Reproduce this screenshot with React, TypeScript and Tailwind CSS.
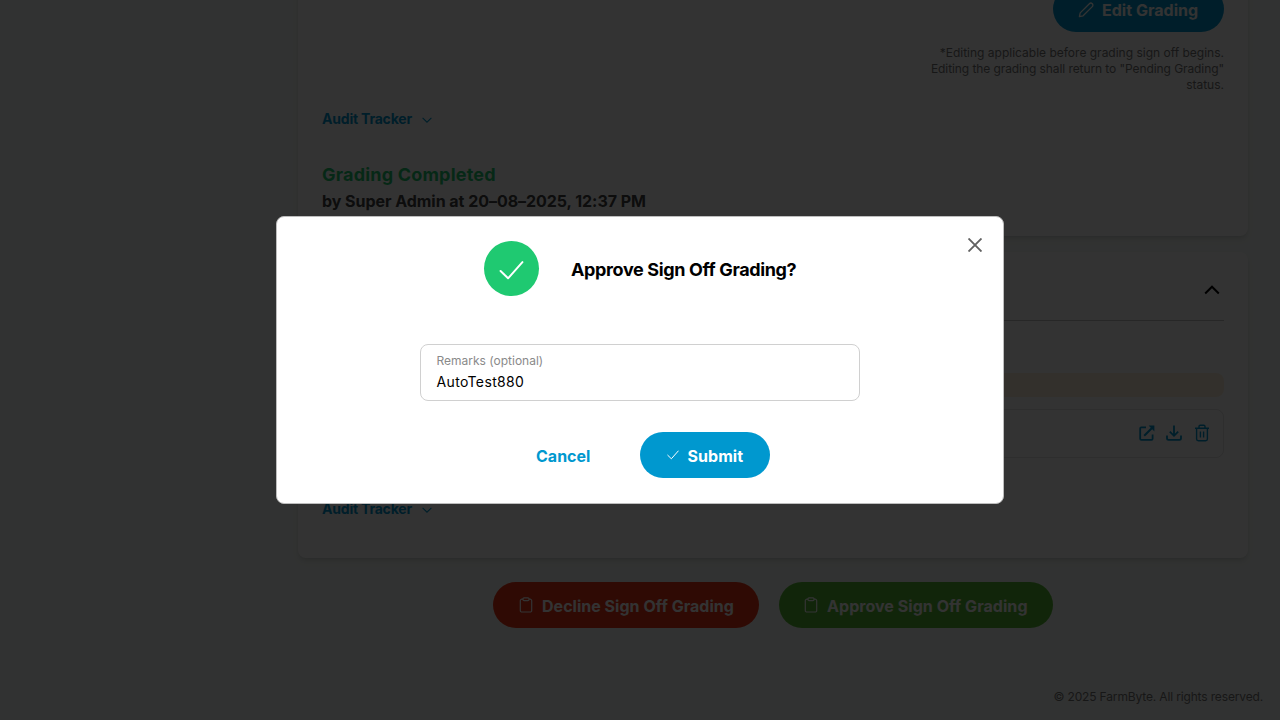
import React from "react";

type IconProps = { className?: string };

const Check = ({ className }: IconProps) => (
  <svg viewBox="0 0 24 24" className={className} fill="none" stroke="currentColor" strokeLinecap="round" strokeLinejoin="round">
    <path d="M1.5 12.5L8.7 19.5L22.5 4" />
  </svg>
);

const Clipboard = () => (
  <svg viewBox="0 0 14 16" className="h-4 w-3.5" fill="none" stroke="currentColor" strokeWidth="1.2">
    <path d="M4 2.2H3A1.6 1.6 0 0 0 1.3 3.8V13.4A1.6 1.6 0 0 0 3 15H11A1.6 1.6 0 0 0 12.7 13.4V3.8A1.6 1.6 0 0 0 11 2.2H10" />
    <rect x="4" y="0.8" width="6" height="2.8" rx="1" />
  </svg>
);

const Pencil = () => (
  <svg viewBox="0 0 16 16" className="size-4" fill="none" stroke="currentColor" strokeWidth="1.3" strokeLinejoin="round">
    <path d="M1.4 14.6L2.2 10.9L11.4 1.7A1.9 1.9 0 0 1 14.3 4.6L5.1 13.8Z" />
  </svg>
);

const OpenIcon = () => (
  <svg viewBox="0 0 16 16" className="size-4" fill="none" stroke="currentColor" strokeWidth="1.8">
    <path d="M7 2.4H2.2A1 1 0 0 0 1.2 3.4V13.8A1 1 0 0 0 2.2 14.8H12.6A1 1 0 0 0 13.6 13.8V9.5" />
    <path d="M5.2 10.8L13.5 2.5" strokeWidth="2" />
    <path d="M9.6 0.6H15.4V6.4Z" fill="currentColor" stroke="none" />
  </svg>
);

const DownloadIcon = () => (
  <svg viewBox="0 0 16 16" className="size-4" fill="none" stroke="currentColor" strokeWidth="1.8">
    <path d="M8 0.4V10.4M3.8 6.6L8 10.8L12.2 6.6" />
    <path d="M1 10.6V13.2A1.6 1.6 0 0 0 2.6 14.8H13.4A1.6 1.6 0 0 0 15 13.2V10.6" />
  </svg>
);

const TrashIcon = () => (
  <svg viewBox="0 0 16 18" className="h-[18px] w-4" fill="none" stroke="currentColor" strokeWidth="1.4">
    <path d="M1 4.3H15M5 4V2.4A1.2 1.2 0 0 1 6.2 1.2H9.8A1.2 1.2 0 0 1 11 2.4V4" />
    <path d="M2.6 4.3V15A1.7 1.7 0 0 0 4.3 16.7H11.7A1.7 1.7 0 0 0 13.4 15V4.3M6.4 7.5V13.5M9.6 7.5V13.5" />
  </svg>
);

const AuditTracker = () => (
  <div className="flex h-5 items-center gap-[10px] text-[#0098cf]">
    <span className="w-[90px] whitespace-nowrap text-sm font-bold tracking-[-0.2px]">Audit Tracker</span>
    <svg viewBox="0 0 10 6" className="mt-0.5 h-1.5 w-2.5" fill="none" stroke="currentColor" strokeWidth="1.1">
      <path d="M0.6 0.8L5 5.2L9.4 0.8" />
    </svg>
  </div>
);

function Page() {
  return (
    <div className="flex h-[720px] w-[1280px] flex-col overflow-hidden bg-[#f5faf7] pl-[298px]">
      <section className="-mt-[30px] flex h-[266px] w-[950px] shrink-0 flex-col rounded-lg bg-white px-6 pt-4 shadow-md">
        <div className="flex flex-col items-end">
          <button className="flex h-[46px] w-[171px] items-center gap-2 rounded-full bg-[#0098cf] pl-[25px] pt-0.5 text-white">
            <Pencil />
            <span className="whitespace-nowrap text-base font-bold tracking-[0.03px]">Edit Grading</span>
          </button>
          <p className="mt-[13px] whitespace-nowrap text-right text-xs leading-4 text-[#757575]">
            *Editing applicable before grading sign off begins.
            <br />
            <span className="tracking-[-0.08px]">Editing the grading shall return to "Pending Grading"</span>
            <br />
            status.
          </p>
        </div>
        <div className="mt-4">
          <AuditTracker />
        </div>
        <h2 className="mt-[34px] h-6 whitespace-nowrap text-lg leading-6 font-bold tracking-[0.2px] text-[#1fc971]">Grading Completed</h2>
        <p className="mt-0.5 whitespace-nowrap text-base leading-6 font-bold tracking-[-0.04px] text-[#424242]">
          by Super Admin at 20–08–2025, 12:37 PM
        </p>
      </section>

      <section className="mt-4 flex h-[306px] w-[950px] shrink-0 flex-col rounded-lg bg-white px-6 shadow-md">
        <div className="flex h-[69px] items-center justify-end border-b border-[#c4c4c4] pt-2 pr-1">
          <svg viewBox="0 0 16 10" className="h-2.5 w-4" fill="none" stroke="black" strokeWidth="2">
            <path d="M1.2 8.5L8 1.7L14.8 8.5" />
          </svg>
        </div>
        <div className="mt-[52px] h-6 rounded-lg bg-[#fff0dc]" />
        <div className="mt-3 flex h-[49px] items-center justify-end gap-3 rounded-lg border border-[#e4e4e4] pr-[13px] pb-px text-[#0098cf]">
          <div className="flex gap-[11px]">
            <OpenIcon />
            <DownloadIcon />
          </div>
          <TrashIcon />
        </div>
        <div className="mt-[41px]">
          <AuditTracker />
        </div>
      </section>

      <div className="mt-6 flex shrink-0 gap-5 pl-[195px] text-white">
        <button className="flex h-[46px] w-[266px] items-center gap-[9px] rounded-full bg-[#eb3214] pl-[26px]">
          <Clipboard />
          <span className="mt-0.5 whitespace-nowrap text-base font-bold tracking-[0.02px]">Decline Sign Off Grading</span>
        </button>
        <button className="flex h-[46px] w-[274px] items-center gap-[9px] rounded-full bg-[#55ba33] pl-[25px]">
          <Clipboard />
          <span className="mt-0.5 whitespace-nowrap text-base font-bold tracking-[0.05px]">Approve Sign Off Grading</span>
        </button>
      </div>

      <footer className="mt-[61px] pr-[17px] text-right text-xs leading-4 tracking-[-0.15px] text-[#757575]">
        © 2025 FarmByte. All rights reserved.
      </footer>
    </div>
  );
}

function ApproveDialog() {
  return (
    <div className="fixed inset-0 flex items-center justify-center bg-black/80">
      <div role="dialog" className="relative flex h-[288px] w-[728px] flex-col items-center rounded-lg border border-[#bdbdbd] bg-white">
        <button aria-label="Close" className="absolute top-[21px] right-[21px] text-[#616161]">
          <svg viewBox="0 0 14 14" className="size-3.5" fill="none" stroke="currentColor" strokeWidth="1.9">
            <path d="M0.5 0.5L13.5 13.5M13.5 0.5L0.5 13.5" />
          </svg>
        </button>
        <div className="mt-6 flex w-[312px] items-center gap-8">
          <div className="flex size-[55px] shrink-0 items-center justify-center rounded-full bg-[#1fc971] text-white">
            <Check className="mt-[3px] size-[25px] stroke-[1.9]" />
          </div>
          <h1 className="pt-[3px] whitespace-nowrap text-lg font-bold tracking-[-0.36px] text-black">Approve Sign Off Grading?</h1>
        </div>
        <div className="mt-12 flex h-[57px] w-[440px] flex-col rounded-lg border border-[#d0d0d0] pt-2 pl-[15.5px]">
          <label className="text-xs leading-4 text-[#8a8a8a]">Remarks (optional)</label>
          <span className="mt-px text-sm leading-6 tracking-[0.35px] text-black">AutoTest880</span>
        </div>
        <div className="mt-[31px] flex w-[260px] items-center">
          <button className="w-[129.5px] pt-0.5 pl-[26px] text-left text-base font-bold text-[#0098cf]">Cancel</button>
          <button className="flex h-[46px] w-[130px] shrink-0 items-center gap-[9px] rounded-full bg-[#0098cf] pl-[27px] text-white">
            <Check className="size-3 stroke-[2]" />
            <span className="pt-0.5 text-base font-bold tracking-[0.05px]">Submit</span>
          </button>
        </div>
      </div>
    </div>
  );
}

export default function App() {
  return (
    <main className="h-[720px] w-[1280px] overflow-hidden font-['Inter','Liberation_Sans',sans-serif]">
      <Page />
      <ApproveDialog />
    </main>
  );
}
